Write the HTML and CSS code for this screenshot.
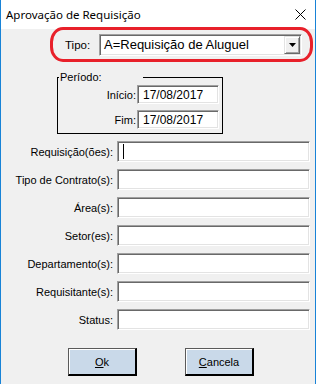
FILE: index.html
```html
<!DOCTYPE html>
<html lang="pt">
<head>
<meta charset="utf-8">
<link rel="stylesheet" href="styles.css">
</head>
<body>
<div class="window">
  <div class="titlebar">
    <span class="title">Aprovação de Requisição</span>
    <svg class="close" width="11" height="11" viewBox="0 0 11 11"><path d="M0.5 0.5 L10.5 10.5 M10.5 0.5 L0.5 10.5" stroke="#000" stroke-width="1" fill="none"/></svg>
  </div>
  <div class="client">
    <div class="highlight">
      <span class="tipo">Tipo:</span>
      <div class="combo">
        <span class="combo-text">A=Requisição de Aluguel</span>
        <span class="combo-btn"><svg width="7" height="4" viewBox="0 0 7 4"><path d="M0 0 H7 L3.5 4 Z" fill="#000"/></svg></span>
      </div>
    </div>
    <fieldset class="period">
      <legend>Período:</legend>
      <div class="period-grid">
        <span class="lbl">Início:</span>
        <div class="edit date">17/08/2017</div>
        <span class="lbl">Fim:</span>
        <div class="edit date">17/08/2017</div>
      </div>
    </fieldset>
    <div class="fields">
      <span class="lbl">Requisição(ões):</span>
      <div class="edit"><span class="caret"></span></div>
      <span class="lbl">Tipo de Contrato(s):</span>
      <div class="edit"></div>
      <span class="lbl">Área(s):</span>
      <div class="edit"></div>
      <span class="lbl">Setor(es):</span>
      <div class="edit"></div>
      <span class="lbl">Departamento(s):</span>
      <div class="edit"></div>
      <span class="lbl">Requisitante(s):</span>
      <div class="edit"></div>
      <span class="lbl">Status:</span>
      <div class="edit"></div>
    </div>
    <div class="buttons">
      <div class="btn"><u>O</u>k</div>
      <div class="btn"><u>C</u>ancela</div>
    </div>
  </div>
</div>
</body>
</html>
```
FILE: styles.css
```css
html, body {
  margin: 0;
  padding: 0;
  background: #f0f0f0;
}
.window {
  width: 316px;
  height: 384px;
  box-sizing: border-box;
  border-left: 1px solid #1883d7;
  border-right: 1px solid #1883d7;
  background: #f0f0f0;
  font-family: "Liberation Sans", Arial, sans-serif;
  font-size: 11px;
  color: #000;
  overflow: hidden;
}
.titlebar {
  height: 29px;
  background: #fff;
  display: flex;
  align-items: center;
  justify-content: space-between;
  padding-left: 5px;
  padding-right: 9px;
}
.title {
  font-family: "Noto Sans", sans-serif;
  font-size: 11.5px;
  margin-top: -1px;
}
.close {
  margin-top: -1px;
}
.client {
  display: flex;
  flex-direction: column;
}
.highlight {
  margin-top: -2px;
  margin-left: 49px;
  width: 263px;
  height: 35px;
  box-sizing: border-box;
  border: 3px solid #e8202a;
  border-radius: 13px / 15px;
  display: flex;
  align-items: center;
  padding-left: 12px;
  padding-top: 1px;
}
.tipo {
  font-size: 11.5px;
  width: 34px;
}
.combo {
  width: 203px;
  height: 22px;
  box-sizing: border-box;
  background: #fff;
  border: 1px solid;
  border-color: #a0a0a0 #fff #fff #a0a0a0;
  box-shadow: inset 1px 1px #696969, inset -1px -1px #e3e3e3;
  display: flex;
  align-items: stretch;
  padding: 1px;
}
.combo-text {
  flex: 1;
  font-size: 13px;
  line-height: 18px;
  padding-left: 3px;
}
.combo-btn {
  width: 16px;
  box-sizing: border-box;
  background: #f0f0f0;
  border: 1px solid;
  border-color: #e3e3e3 #696969 #696969 #e3e3e3;
  box-shadow: inset 1px 1px #fff, inset -1px -1px #a0a0a0;
  display: flex;
  align-items: center;
  justify-content: center;
}
.period {
  margin: 9px 0 0 56px;
  padding: 1px 3px 4px 0;
  width: 166px;
  box-sizing: border-box;
  border: 1px solid #000;
  min-inline-size: auto;
}
.period legend {
  padding: 0 0 0 1px;
  margin-left: 1px;
  width: 84px;
  box-sizing: border-box;
  line-height: 13px;
  background: #f0f0f0;
}
.period-grid {
  display: grid;
  grid-template-columns: 78px 82px;
  column-gap: 1px;
  row-gap: 6px;
  align-items: center;
}
.lbl {
  text-align: right;
  white-space: nowrap;
}
.edit {
  height: 21px;
  box-sizing: border-box;
  background: #fff;
  border: 1px solid;
  border-color: #a0a0a0 #fff #fff #a0a0a0;
  box-shadow: inset 1px 1px #696969, inset -1px -1px #e3e3e3;
  display: flex;
  align-items: center;
  padding-left: 5px;
}
.edit.date {
  height: 19px;
  font-size: 12px;
}
.caret {
  width: 1px;
  height: 15px;
  background: #000;
}
.fields {
  margin-top: 7px;
  display: grid;
  grid-template-columns: 112px 193px;
  column-gap: 4px;
  row-gap: 7px;
  align-items: center;
}
.buttons {
  margin-top: 18px;
  margin-left: 67px;
  display: flex;
  gap: 48px;
}
.btn {
  width: 69px;
  height: 28px;
  box-sizing: border-box;
  background: #c9d9e9;
  border: 1px solid #5a5a5a;
  border-right: 2px solid #000;
  border-bottom: 2px solid #000;
  box-shadow: inset 1px 1px #fff;
  display: flex;
  align-items: center;
  justify-content: center;
  font-size: 11px;
}
.btn u {
  text-decoration-thickness: 1px;
  text-underline-offset: 1px;
}
```
